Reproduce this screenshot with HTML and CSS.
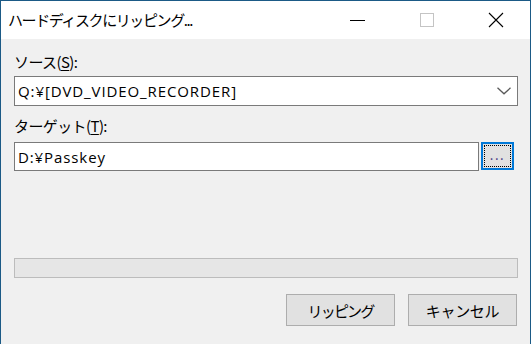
FILE: index.html
```html
<!DOCTYPE html>
<html lang="ja">
<head>
<meta charset="utf-8">
<title>ハードディスクにリッピング...</title>
<link rel="stylesheet" href="styles.css">
</head>
<body>
<div class="window">
  <div class="titlebar">
    <div class="title">ハードディスクにリッピング...</div>
    <div class="caption">
      <div class="cap-btn">
        <svg width="16" height="16" viewBox="0 0 16 16"><line x1="0" y1="8.5" x2="15" y2="8.5" stroke="#000" stroke-width="1"/></svg>
      </div>
      <div class="cap-btn">
        <svg width="16" height="16" viewBox="0 0 16 16"><rect x="1.5" y="1.5" width="13" height="13" fill="none" stroke="#c4c4c4" stroke-width="1"/></svg>
      </div>
      <div class="cap-btn">
        <svg width="16" height="16" viewBox="0 0 16 16"><path d="M1 1 L15 15 M15 1 L1 15" stroke="#000" stroke-width="1.1" fill="none"/></svg>
      </div>
    </div>
  </div>
  <div class="client">
    <div class="label">ソース(<u>S</u>):</div>
    <div class="combo">
      <span class="field-text">Q:¥[DVD_VIDEO_RECORDER]</span>
      <svg class="chevron" width="14" height="8" viewBox="0 0 14 8"><path d="M0.5 0.8 L7 6.8 L13.5 0.8" stroke="#5a5a5a" stroke-width="1.3" fill="none"/></svg>
    </div>
    <div class="label label-target">ターゲット(<u>T</u>):</div>
    <div class="target-row">
      <div class="textbox"><span class="field-text">D:¥Passkey</span></div>
      <div class="browse"><div class="focus">...</div></div>
    </div>
    <div class="progress"></div>
    <div class="buttons">
      <div class="btn btn-narrow">リッピング</div>
      <div class="btn">キャンセル</div>
    </div>
  </div>
</div>
</body>
</html>
```
FILE: styles.css
```css
html, body {
  margin: 0;
  padding: 0;
  width: 531px;
  height: 344px;
  overflow: hidden;
  background: #f0f0f0;
}
body {
  font-family: "Noto Sans CJK JP", "Noto Sans", sans-serif;
  font-size: 15px;
  color: #000;
}
.window {
  box-sizing: border-box;
  width: 531px;
  height: 344px;
  border: 1px solid #1b5a86;
  border-bottom: none;
  background: #f0f0f0;
  display: flex;
  flex-direction: column;
}
.titlebar {
  height: 38px;
  background: #fff;
  display: flex;
  align-items: center;
  justify-content: space-between;
}
.title {
  padding-left: 7px;
  font-size: 15px;
  line-height: 20px;
  letter-spacing: -1.4px;
}
.caption {
  display: flex;
  height: 38px;
}
.cap-btn {
  width: 69px;
  height: 38px;
  display: flex;
  align-items: center;
  justify-content: center;
}
.client {
  padding: 13px 12px 0 13px;
  display: flex;
  flex-direction: column;
}
.label {
  height: 20px;
  line-height: 20px;
  font-size: 15px;
  margin-bottom: 4px;
  letter-spacing: -0.6px;
}
.label u {
  text-underline-offset: 2px;
}
.label-target {
  margin-top: 10px;
  margin-bottom: 6px;
}
.combo {
  box-sizing: border-box;
  height: 30px;
  background: #fff;
  border: 1px solid #7a7a7a;
  display: flex;
  align-items: center;
  justify-content: space-between;
  padding: 0 6px 0 3px;
}
.field-text {
  font-family: "Open Sans", "Noto Sans CJK JP", sans-serif;
  font-size: 15px;
  line-height: 20px;
  letter-spacing: 0.9px;
}
.chevron {
  display: block;
}
.target-row {
  display: flex;
  align-items: flex-start;
  margin-right: 4px;
}
.textbox {
  box-sizing: border-box;
  flex: 1;
  height: 29px;
  background: #fff;
  border: 1px solid #7a7a7a;
  display: flex;
  align-items: center;
  padding: 0 3px;
}
.browse {
  box-sizing: border-box;
  width: 33px;
  height: 28px;
  margin-left: 2px;
  border: 2px solid #0078d7;
  background: #e1e1e1;
  padding: 1px;
}
.focus {
  box-sizing: border-box;
  height: 100%;
  border: 1px dotted #000;
  text-align: center;
  font-size: 13px;
  line-height: 18px;
  color: #3a2a7a;
  letter-spacing: 1.5px;
}
.progress {
  box-sizing: border-box;
  height: 20px;
  margin-top: 87px;
  background: #e6e6e6;
  border: 1px solid #bcbcbc;
}
.buttons {
  display: flex;
  justify-content: flex-end;
  gap: 13px;
  margin-top: 16px;
  margin-right: 1px;
}
.btn {
  box-sizing: border-box;
  width: 109px;
  height: 32px;
  background: #e1e1e1;
  border: 1px solid #adadad;
  display: flex;
  align-items: center;
  justify-content: center;
  font-size: 15px;
  letter-spacing: -0.3px;
}
.btn-narrow {
  letter-spacing: -1.8px;
}
```
